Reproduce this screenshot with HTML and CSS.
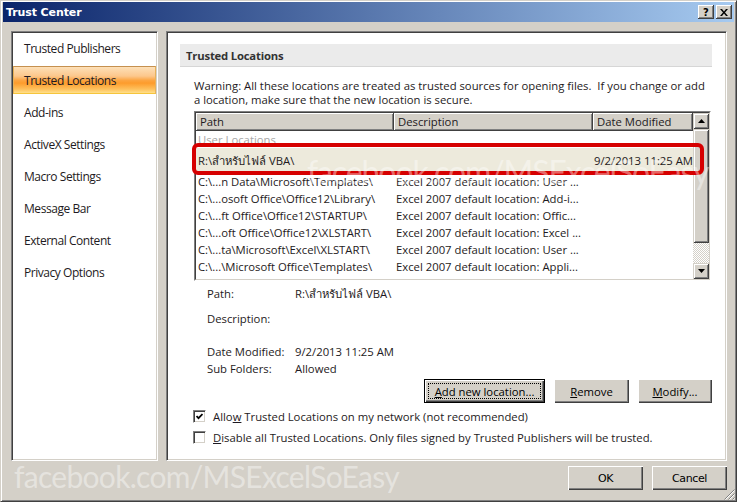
FILE: index.html
```html
<!DOCTYPE html>
<html lang="en">
<head>
<meta charset="utf-8">
<title>Trust Center</title>
<link rel="stylesheet" href="styles.css">
</head>
<body>
<div class="window">
  <header class="titlebar">
    <span class="title">Trust Center</span>
    <div class="caption-buttons">
      <span class="cap-btn">?</span>
      <span class="cap-btn"><svg width="8" height="7" viewBox="0 0 8 7"><path d="M0 0h2l2 2.4L6 0h2L5 3.5 8 7H6L4 4.6 2 7H0l3-3.5z" fill="#000"/></svg></span>
    </div>
  </header>
  <div class="main">
    <nav class="sidebar">
      <div class="nav-item"><span class="nav-label">Trusted Publishers</span></div>
      <div class="nav-item"><span class="nav-label active">Trusted Locations</span></div>
      <div class="nav-item"><span class="nav-label">Add-ins</span></div>
      <div class="nav-item"><span class="nav-label">ActiveX Settings</span></div>
      <div class="nav-item"><span class="nav-label">Macro Settings</span></div>
      <div class="nav-item"><span class="nav-label">Message Bar</span></div>
      <div class="nav-item"><span class="nav-label">External Content</span></div>
      <div class="nav-item"><span class="nav-label">Privacy Options</span></div>
    </nav>
    <section class="panel">
      <div class="section-title">Trusted Locations</div>
      <div class="section-body">
        <p class="warning">Warning: All these locations are treated as trusted sources for opening files.&nbsp; If you change or add<br>a location, make sure that the new location is secure.</p>
        <div class="list">
          <div class="list-inner">
            <div class="list-main">
              <div class="list-header">
                <div class="hcell c-path">Path</div>
                <div class="hcell c-desc">Description</div>
                <div class="hcell c-date">Date Modified</div>
              </div>
              <div class="list-body">
                <div class="row group"><div class="cell">User Locations</div></div>
                <div class="row selected"><div class="cell c-path">R:\สำหรับไฟล์ VBA\</div><div class="cell c-desc"></div><div class="cell c-date">9/2/2013 11:25 AM</div></div>
                <div class="row"><div class="cell c-path">C:\...n Data\Microsoft\Templates\</div><div class="cell c-desc">Excel 2007 default location: User ...</div><div class="cell c-date"></div></div>
                <div class="row"><div class="cell c-path">C:\...osoft Office\Office12\Library\</div><div class="cell c-desc">Excel 2007 default location: Add-i...</div><div class="cell c-date"></div></div>
                <div class="row"><div class="cell c-path">C:\...ft Office\Office12\STARTUP\</div><div class="cell c-desc">Excel 2007 default location: Offic...</div><div class="cell c-date"></div></div>
                <div class="row"><div class="cell c-path">C:\...oft Office\Office12\XLSTART\</div><div class="cell c-desc">Excel 2007 default location: Excel ...</div><div class="cell c-date"></div></div>
                <div class="row"><div class="cell c-path">C:\...ta\Microsoft\Excel\XLSTART\</div><div class="cell c-desc">Excel 2007 default location: User ...</div><div class="cell c-date"></div></div>
                <div class="row"><div class="cell c-path">C:\...\Microsoft Office\Templates\</div><div class="cell c-desc">Excel 2007 default location: Appli...</div><div class="cell c-date"></div></div>
              </div>
            </div>
            <div class="scrollbar">
              <div class="sb-btn"><svg width="7" height="4" viewBox="0 0 7 4"><polygon points="0,4 7,4 3.5,0" fill="#000"/></svg></div>
              <div class="sb-thumb"></div>
              <div class="sb-track"></div>
              <div class="sb-btn"><svg width="7" height="4" viewBox="0 0 7 4"><polygon points="0,0 7,0 3.5,4" fill="#000"/></svg></div>
            </div>
          </div>
          <div class="mark"></div>
          <div class="watermark wm-list">facebook.com/MSExcelSoEasy</div>
        </div>
        <div class="details">
          <span>Path:</span><span>R:\สำหรับไฟล์ VBA\</span>
          <span>Description:</span><span></span>
          <span>Date Modified:</span><span>9/2/2013 11:25 AM</span>
          <span>Sub Folders:</span><span>Allowed</span>
        </div>
        <div class="actions">
          <button class="btn btn-default w-add"><u>A</u>dd new location...</button>
          <button class="btn w-remove"><u>R</u>emove</button>
          <button class="btn w-modify"><u>M</u>odify...</button>
        </div>
        <div class="checks">
          <label class="check"><span class="checkbox"><svg width="7" height="7" viewBox="0 0 7 7"><polyline points="0.5,3 2.5,5.2 6.5,1" fill="none" stroke="#000" stroke-width="1.8"/></svg></span><span>Allo<u>w</u> Trusted Locations on my network (not recommended)</span></label>
          <label class="check"><span class="checkbox"></span><span><u>D</u>isable all Trusted Locations. Only files signed by Trusted Publishers will be trusted.</span></label>
        </div>
      </div>
    </section>
  </div>
  <footer class="footer">
    <button class="btn dlg-btn">OK</button>
    <button class="btn dlg-btn">Cancel</button>
  </footer>
  <div class="watermark wm-bottom">facebook.com/MSExcelSoEasy</div>
  <svg class="grip" width="12" height="12" viewBox="0 0 12 12"><path d="M11.5 1.5l-10 10M11.5 5.5l-6 6M11.5 9.5l-2 2" stroke="#808080"/><path d="M11.5 2.5l-9 9M11.5 6.5l-5 5M11.5 10.5l-1 1" stroke="#fff"/></svg>
</div>
</body>
</html>
```
FILE: styles.css
```css
* { box-sizing: border-box; margin: 0; padding: 0; }
html, body { width: 737px; height: 502px; overflow: hidden; }
body {
  background: #d4d0c8;
  font-family: "Open Sans", "Noto Sans", sans-serif;
  font-size: 11.3px;
  letter-spacing: 0;
  color: #1e1a22;
}
.window {
  position: relative;
  width: 737px;
  height: 502px;
  display: flex;
  flex-direction: column;
  border: 1px solid;
  border-color: #d4d0c8 #404040 #404040 #d4d0c8;
  box-shadow: inset 1px 1px 0 #fff, inset -1px -1px 0 #808080;
  padding: 1px 2px 2px 2px;
}
.titlebar {
  height: 20px;
  flex: none;
  display: flex;
  align-items: center;
  justify-content: space-between;
  padding: 0 2px 0 3px;
  background: linear-gradient(to right, #0a246a, #a6caf0);
}
.title {
  font-family: "DejaVu Sans", sans-serif;
  font-weight: bold;
  font-size: 11px;
  letter-spacing: -0.1px;
  color: #fff;
}
.caption-buttons { display: flex; gap: 2px; }
.cap-btn {
  width: 16px;
  height: 14px;
  background: #d4d0c8;
  box-shadow: inset -1px -1px 0 #404040, inset 1px 1px 0 #fff, inset -2px -2px 0 #808080;
  display: flex;
  align-items: center;
  justify-content: center;
  font-family: "DejaVu Sans", sans-serif;
  font-weight: bold;
  font-size: 10px;
  letter-spacing: 0;
  color: #000;
}
.main {
  flex: none;
  height: 439px;
  display: flex;
  gap: 8px;
  padding: 9px 7px 0 8px;
}
.sidebar {
  width: 147px;
  flex: none;
  background: #fff;
  border: 1px solid;
  border-color: #808080 #fff #fff #808080;
  box-shadow: inset 1px 1px 0 #404040, inset -1px -1px 0 #d4d0c8;
  padding: 0 1px 1px 1px;
  font-size: 12px;
  letter-spacing: -0.45px;
}
.nav-item { height: 32px; padding: 2px 0; }
.nav-label {
  height: 28px;
  display: flex;
  align-items: center;
  padding-left: 11px;
  white-space: nowrap;
}
.nav-label.active {
  background: linear-gradient(to bottom, #fde0b8 0%, #fcc78c 35%, #fca43f 52%, #fd9c2c 62%, #fec05c 85%, #ffe08a 100%);
  border: 1px solid;
  border-color: #c5904f #e7b25a #f6c53c #e7b25a;
  padding-left: 10px;
}
.panel {
  flex: 1;
  background: #fff;
  border: 1px solid;
  border-color: #808080 #fff #fff #808080;
  box-shadow: inset 1px 1px 0 #404040, inset -1px -1px 0 #d4d0c8;
  padding: 12px 14px 0 13px;
  display: flex;
  flex-direction: column;
}
.section-title {
  height: 23px;
  flex: none;
  background: #ebebeb;
  border-bottom: 1px solid #d6d6d6;
  padding-left: 6px;
  display: flex;
  align-items: center;
  font-weight: bold;
  letter-spacing: -0.2px;
  color: #333;
}
.section-body { padding-left: 14px; }
.warning {
  margin-top: 12px;
  line-height: 14px;
  white-space: nowrap;
}
.list {
  position: relative;
  width: 517px;
  height: 170px;
  margin-top: 4px;
  border: 1px solid;
  border-color: #808080 #fff #fff #808080;
}
.list-inner {
  display: flex;
  height: 100%;
  border: 1px solid;
  border-color: #404040 #d4d0c8 #d4d0c8 #404040;
  background: #fff;
  overflow: hidden;
}
.list-main { flex: 1; min-width: 0; display: flex; flex-direction: column; }
.list-header { display: flex; height: 18px; flex: none; }
.hcell {
  background: #d4d0c8;
  box-shadow: inset 1px 1px 0 #fff, inset -1px -1px 0 #808080;
  border-right: 1px solid #404040;
  border-bottom: 1px solid #404040;
  padding-left: 4px;
  display: flex;
  align-items: center;
  white-space: nowrap;
  overflow: hidden;
}
.c-path { width: 198px; flex: none; }
.c-desc { width: 199px; flex: none; }
.c-date { flex: 1; min-width: 0; }
.row { display: flex; height: 17px; align-items: center; }
.cell { padding-left: 2px; white-space: nowrap; overflow: hidden; }
.row.selected { height: 25px; background: #edeadc; }
.row.selected .c-date { padding-left: 1px; }
.group .cell { color: #a8a8a8; }
.scrollbar { width: 16px; flex: none; display: flex; flex-direction: column; }
.sb-btn, .sb-thumb {
  background: #d4d0c8;
  box-shadow: inset 1px 1px 0 #d4d0c8, inset -1px -1px 0 #404040, inset 2px 2px 0 #fff, inset -2px -2px 0 #808080;
}
.sb-btn { height: 16px; flex: none; display: flex; align-items: center; justify-content: center; }
.sb-thumb { flex: 1; }
.sb-track {
  height: 20px;
  flex: none;
  background: repeating-conic-gradient(#fff 0 25%, #d4d0c8 0 50%) 0 0 / 2px 2px;
}
.mark {
  position: absolute;
  left: -3px;
  top: 31px;
  width: 512px;
  height: 32px;
  border: 4px solid #d60000;
  border-radius: 6px;
}
.watermark {
  position: absolute;
  font-family: "Lato", "Open Sans", sans-serif;
  white-space: nowrap;
  pointer-events: none;
}
.wm-list {
  left: 112px;
  top: 40px;
  font-size: 32px;
  letter-spacing: -1.1px;
  color: rgba(255, 255, 255, 0.42);
}
.wm-bottom {
  left: 13px;
  top: 457px;
  font-size: 30px;
  letter-spacing: -0.7px;
  color: rgba(255, 255, 255, 0.42);
}
.details {
  display: grid;
  grid-template-columns: 88px 1fr;
  grid-template-rows: 25px 33px 17px 17px;
  line-height: 17px;
  margin-top: 4px;
  padding-left: 13px;
}
.actions {
  display: flex;
  justify-content: flex-end;
  gap: 9px;
  margin-top: 2px;
}
.btn {
  position: relative;
  height: 24px;
  background: #d4d0c8;
  border: none;
  box-shadow: inset 1px 1px 0 #fff, inset -1px -1px 0 #404040, inset -2px -2px 0 #808080;
  font-family: inherit;
  font-size: 11.3px;
  letter-spacing: inherit;
  color: #000;
  display: flex;
  align-items: center;
  justify-content: center;
}
.btn-default {
  border: 1px solid #000;
}
.btn-default::after {
  content: "";
  position: absolute;
  inset: 3px;
  border: 1px dotted #000;
}
.w-add { width: 121px; }
.w-remove { width: 75px; }
.w-modify { width: 74px; }
.checks { margin-top: 2px; }
.check {
  display: flex;
  align-items: center;
  gap: 7px;
  height: 22px;
  margin-left: -1px;
}
.check + .check { height: 21px; }
.checkbox {
  width: 13px;
  height: 13px;
  flex: none;
  background: #fff;
  border: 1px solid;
  border-color: #808080 #fff #fff #808080;
  box-shadow: inset 1px 1px 0 #404040, inset -1px -1px 0 #d4d0c8;
  display: flex;
  align-items: center;
  justify-content: center;
}
.footer {
  flex: 1;
  display: flex;
  justify-content: flex-end;
  align-items: flex-start;
  gap: 9px;
  padding: 5px 7px 0 0;
}
.dlg-btn {
  width: 75px;
  font-family: "DejaVu Sans", sans-serif;
  font-size: 11px;
  letter-spacing: -0.4px;
}
.grip {
  position: absolute;
  right: 1px;
  bottom: 1px;
}
```
